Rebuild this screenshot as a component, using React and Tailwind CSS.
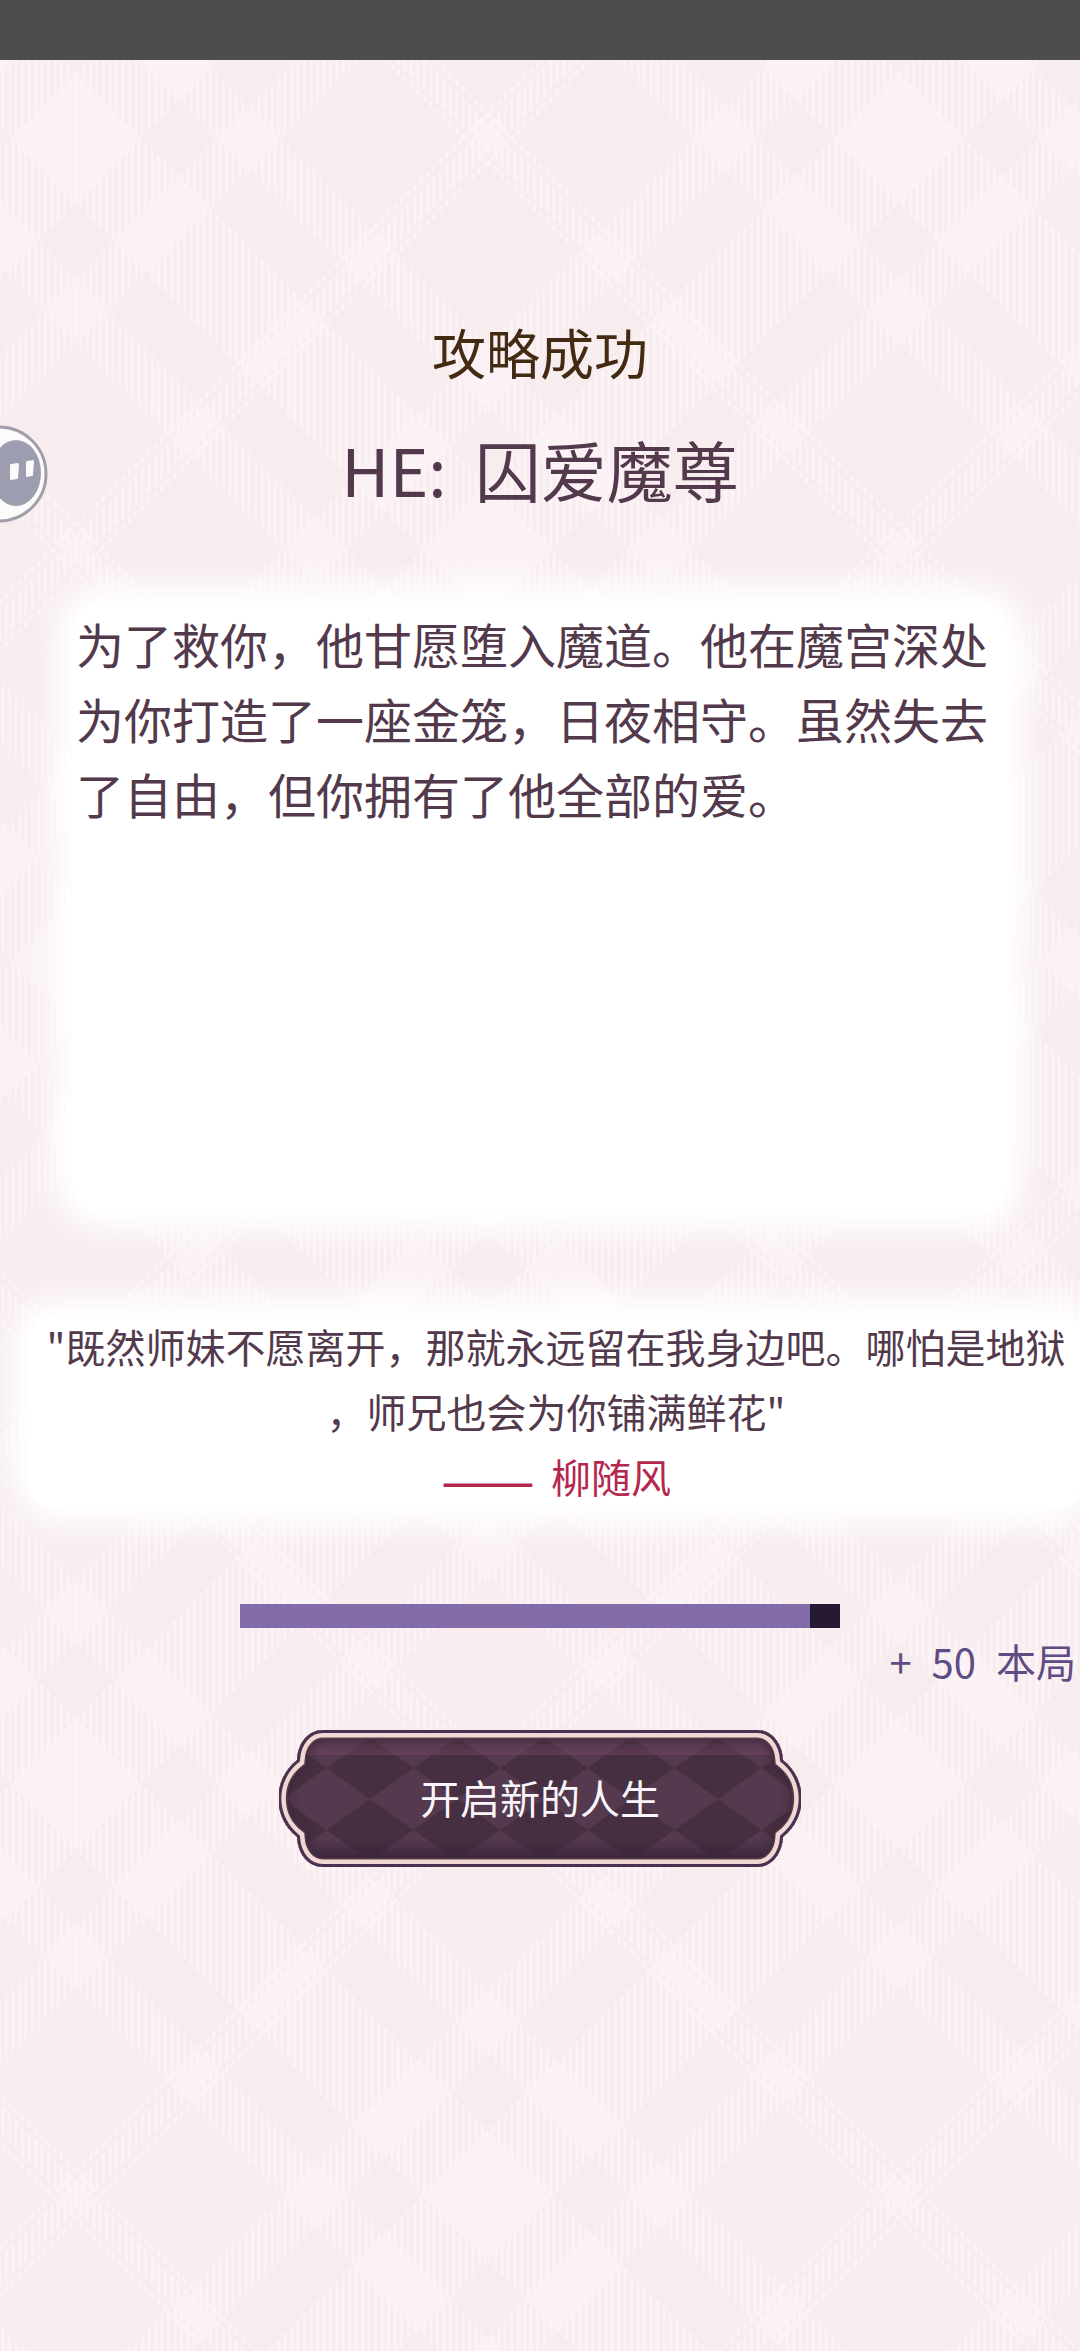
import React from 'react';

// Plaid bands inside one repeat: centre line and width
const TILE = 823;
const LINE = TILE / 127;
const BANDS = [
  { at: 0, width: 130 },
  { at: 173, width: 56 },
  { at: 142, width: 3 },
  { at: 204, width: 3 },
  { at: 388, width: 5 },
  { at: 412, width: 30 },
  { at: 436, width: 5 },
  { at: 619, width: 3 },
  { at: 650, width: 56 },
  { at: 681, width: 3 },
  { at: 823, width: 130 },
];

const bandPath = (direction) =>
  BANDS.map(({ at, width }) =>
    [-TILE, 0, TILE]
      .map((offset) => {
        const a = at - width / 2 + offset;
        const b = at + width / 2 + offset;
        const shift = TILE * direction;
        return `M${a} 0H${b}L${b + shift} ${TILE}H${a + shift}Z`;
      })
      .join('')
  ).join('');

const PlaidBackground = () => (
  <svg className="absolute inset-0 h-full w-full" aria-hidden="true">
    <defs>
      <pattern id="evenLines" width={LINE} height="8" patternUnits="userSpaceOnUse">
        <rect width={LINE / 2} height="8" fill="#fcf3f7" />
      </pattern>
      <pattern id="oddLines" width={LINE} height="8" patternUnits="userSpaceOnUse">
        <rect x={LINE / 2} width={LINE / 2} height="8" fill="#fcf3f7" />
      </pattern>
      <pattern id="plaid" x="76" y="138" width={TILE} height={TILE} patternUnits="userSpaceOnUse">
        <path d={bandPath(-1)} fill="url(#evenLines)" />
        <path d={bandPath(1)} fill="url(#oddLines)" />
      </pattern>
    </defs>
    <rect width="100%" height="100%" fill="url(#plaid)" />
  </svg>
);

const FloatingBall = () => (
  <button type="button" aria-label="悬浮球" className="absolute top-[425px] left-0 h-[98px] w-12">
    <svg viewBox="0 0 48 98" className="h-full w-full">
      <circle cx="-1" cy="49" r="47" fill="#fcfafb" stroke="#a09ea9" strokeWidth="3" />
      <ellipse cx="16" cy="48" rx="25" ry="33" fill="#9c9eb0" />
      <path d="M10 40Q10 39 12 39L17 38Q19 38 19 40L18 53Q18 54 17 54L11 55Q10 55 10 54Z" fill="#fcfafb" />
      <path d="M26 37Q26 36 28 36L33 35Q34 35 34 37L33 50Q33 51 32 51L27 52Q26 52 26 51Z" fill="#fcfafb" />
    </svg>
  </button>
);

const FRAME =
  'M44 0H478C492 0 503 12 504 30A49 49 0 0 1 504 107C503 125 492 137 478 137H44C30 137 19 125 18 107A49 49 0 0 1 18 30C19 12 30 0 44 0Z';

const ButtonFrame = () => (
  <svg viewBox="0 0 522 137" className="absolute inset-0 h-full w-full" aria-hidden="true">
    <defs>
      <clipPath id="frameClip">
        <path d={FRAME} />
      </clipPath>
      <pattern id="argyle" x="4" y="38" width="87" height="62" patternUnits="userSpaceOnUse">
        <rect width="87" height="62" fill="#462f41" />
        <path d="M0 31L43.5 0L87 31L43.5 62Z" fill="#54394f" />
      </pattern>
      <linearGradient id="gloss" x1="0" y1="0" x2="0" y2="1">
        <stop offset="0" stopColor="#7a4565" stopOpacity="0.1" />
        <stop offset="1" stopColor="#7a4565" stopOpacity="0.5" />
      </linearGradient>
      <linearGradient id="shade" x1="0" y1="0" x2="0" y2="1">
        <stop offset="0" stopColor="#35253b" stopOpacity="0.1" />
        <stop offset="1" stopColor="#35253b" stopOpacity="0.7" />
      </linearGradient>
      <filter id="soften">
        <feGaussianBlur stdDeviation="4" />
      </filter>
    </defs>
    <g clipPath="url(#frameClip)">
      <rect width="522" height="137" fill="url(#argyle)" />
      <rect y="8" width="522" height="17" fill="url(#gloss)" />
      <rect y="111" width="522" height="19" fill="url(#shade)" />
      <path d={FRAME} fill="none" stroke="#38243a" strokeOpacity="0.8" strokeWidth="22" filter="url(#soften)" />
      <path d={FRAME} fill="none" stroke="#5b3a48" strokeWidth="18" />
      <path d={FRAME} fill="none" stroke="#f0d9d5" strokeWidth="15" />
      <path d={FRAME} fill="none" stroke="#4b3050" strokeWidth="6" />
    </g>
  </svg>
);

const EndingCard = () => (
  <section className="mx-[72px] mt-[86px] min-h-[612px] rounded-[32px] bg-white px-1 pt-1 shadow-[0_0_30px_16px_#fff]">
    <p className="text-[48px] leading-[75px]">
      为了救你，他甘愿堕入魔道。他在魔宫深处为你打造了一座金笼，日夜相守。虽然失去了自由，但你拥有了他全部的爱。
    </p>
  </section>
);

const QuoteCard = () => (
  <blockquote className="mt-[100px] -mr-1 ml-7 rounded-[32px] bg-white text-center text-[40px] leading-[65px] whitespace-nowrap shadow-[0_0_30px_16px_#fff]">
    <p>
      "既然师妹不愿离开，那就永远留在我身边吧。哪怕是地狱
      <br />
      ，师兄也会为你铺满鲜花"
    </p>
    <footer className="flex items-center justify-center gap-4 text-[#b5284e]">
      <span className="text-[56px] leading-none">——</span>
      <span>柳随风</span>
    </footer>
  </blockquote>
);

const ProgressBar = ({ value }) => (
  <div
    role="progressbar"
    aria-label="进度"
    aria-valuenow={value}
    aria-valuemin={0}
    aria-valuemax={100}
    className="mx-auto mt-[95px] h-6 w-[600px] bg-[#261932]"
  >
    <div className="h-full bg-[#836ca9]" style={{ width: `${value}%` }} />
  </div>
);

const App = () => {
  return (
    <div className="relative min-h-screen overflow-hidden bg-[#f8edee] font-['Noto_Sans_CJK_SC',sans-serif] text-[#52394c]">
      <PlaidBackground />
      <div className="relative h-[60px] bg-[#4d4d4d]" />

      <main className="relative pt-[256px] pb-20">
        <p className="text-center text-[54px] leading-[72px] text-[#432a12]">攻略成功</p>
        <h1 className="mt-8 flex justify-center gap-7 text-[66px] leading-[96px]">
          <span>HE:</span>
          <span>囚爱魔尊</span>
        </h1>

        <EndingCard />
        <QuoteCard />

        <ProgressBar value={95} />
        <div className="mt-2 flex justify-end gap-5 pr-1 text-[40px] leading-[50px] whitespace-nowrap text-[#5f4c85]">
          <span>+</span>
          <span>50</span>
          <span>本局</span>
        </div>

        <button
          type="button"
          className="relative mx-auto mt-11 flex h-[137px] w-[522px] items-center justify-center pb-1 text-[40px] text-[#faf5fa]"
        >
          <ButtonFrame />
          <span className="relative">开启新的人生</span>
        </button>
      </main>

      <FloatingBall />
    </div>
  );
};

export default App;
